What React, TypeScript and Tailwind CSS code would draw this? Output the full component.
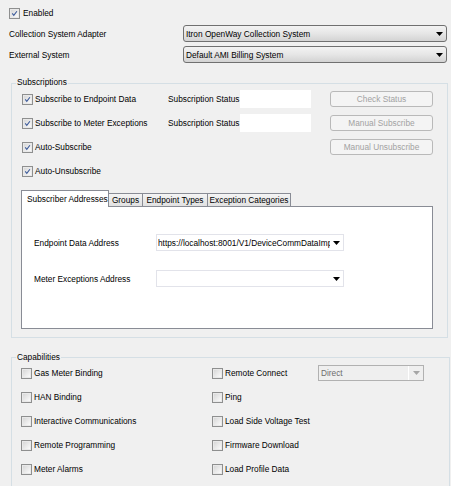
import React from "react";

type CheckProps = { checked?: boolean };

const Check = ({ checked }: CheckProps) => (
  <span className="flex h-[11px] w-[11px] shrink-0 items-center justify-center border border-[#8e8f8f] bg-white">
    <span className="flex h-[9px] w-[9px] items-center justify-center border border-[#e9e9e9] bg-linear-to-br from-[#d8d8d8] to-[#fafafa]">
      {checked && (
        <svg width="9" height="9" viewBox="0 0 9 9">
          <path
            d="M1.6 4.4 L3.6 6.9 L7.6 1.6"
            fill="none"
            stroke="#3b5a9a"
            strokeWidth="1.4"
          />
        </svg>
      )}
    </span>
  </span>
);

const Arrow = ({ color = "#000" }: { color?: string }) => (
  <svg width="7" height="4" viewBox="0 0 7 4" className="shrink-0">
    <polygon points="0,0 7,0 3.5,4" fill={color} />
  </svg>
);

const CheckLabel = ({
  checked,
  label,
  className = "",
}: CheckProps & { label: string; className?: string }) => (
  <div className={`flex items-center gap-[2px] ${className}`}>
    <Check checked={checked} />
    <span className="whitespace-nowrap">{label}</span>
  </div>
);

const SystemSelect = ({ value }: { value: string }) => (
  <div className="flex h-[17px] w-[264px] items-center justify-between rounded-[3px] border border-[#707070] bg-linear-to-b from-[#f3f3f3] via-[#e6e6e6] to-[#d3d3d3] pl-[2px] pr-[3px]">
    <span className="whitespace-nowrap">{value}</span>
    <Arrow />
  </div>
);

const DisabledButton = ({ label }: { label: string }) => (
  <div className="flex h-[16px] w-[103px] shrink-0 items-center justify-center rounded-[3px] border border-[#b9b9b9] bg-[#f4f4f4] text-[#a2a2a2]">
    {label}
  </div>
);

const AddressSelect = ({ value }: { value: string }) => (
  <div className="flex h-[17px] w-[188px] items-center justify-between border border-[#e2e3ea] bg-white pl-[1px] pr-[3px]">
    <span className="overflow-hidden whitespace-nowrap">{value}</span>
    <span className="ml-[3px] flex">
      <Arrow />
    </span>
  </div>
);

const subscriptionRows = [
  { label: "Subscribe to Endpoint Data", status: true, button: "Check Status" },
  { label: "Subscribe to Meter Exceptions", status: true, button: "Manual Subscribe" },
  { label: "Auto-Subscribe", status: false, button: "Manual Unsubscribe" },
  { label: "Auto-Unsubscribe", status: false, button: "" },
];

const tabs = [
  { label: "Groups", w: "w-[34px]" },
  { label: "Endpoint Types", w: "w-[65px]" },
  { label: "Exception Categories", w: "w-[83px]" },
];

const leftCaps = [
  "Gas Meter Binding",
  "HAN Binding",
  "Interactive Communications",
  "Remote Programming",
  "Meter Alarms",
];

const rightCaps = [
  "Remote Connect",
  "Ping",
  "Load Side Voltage Test",
  "Firmware Download",
  "Load Profile Data",
];

export default function App() {
  return (
    <div className="h-[486px] w-[451px] overflow-hidden bg-[#f0f0f0] font-['Liberation_Sans',Arial,sans-serif] text-[8.3px] leading-[10px] text-black">
      {/* top settings */}
      <div className="flex flex-col pl-[9px]">
        <CheckLabel checked label="Enabled" className="mt-[4px] h-[18px] gap-[3px]" />
        <div className="mt-[3px] flex items-center">
          <span className="w-[174px]">Collection System Adapter</span>
          <SystemSelect value="Itron OpenWay Collection System" />
        </div>
        <div className="mt-[4px] flex items-center">
          <span className="w-[174px]">External System</span>
          <SystemSelect value="Default AMI Billing System" />
        </div>
      </div>

      {/* subscriptions group */}
      <div className="relative ml-[11px] mt-[20px] h-[255px] w-[437px] border border-[#d5dfe5]">
        <span className="absolute left-[4px] top-[-8px] bg-[#f0f0f0] px-[1px] leading-[12px]">
          Subscriptions
        </span>
        <div className="flex flex-col gap-[6px] pl-[10px] pt-[6px]">
          {subscriptionRows.map((row) => (
            <div key={row.label} className="flex h-[18px] items-center">
              <CheckLabel checked label={row.label} className="w-[146px]" />
              {row.status ? (
                <>
                  <span className="w-[72px] whitespace-nowrap">Subscription Status</span>
                  <div className="h-[18px] w-[71px] bg-white" />
                </>
              ) : (
                <div className="w-[143px]" />
              )}
              {row.button && (
                <div className="ml-[19px]">
                  <DisabledButton label={row.button} />
                </div>
              )}
            </div>
          ))}
        </div>

        {/* tabs */}
        <div className="ml-[9px] mt-[10px] w-[412px]">
          <div className="flex h-[16px] items-end">
            <div className="relative z-10 -mb-px flex h-[17px] w-[88px] items-start border-x border-t border-[#898c95] bg-white pl-[5px] pt-[3px]">
              Subscriber Addresses
            </div>
            {tabs.map((t, i) => (
              <div
                key={t.label}
                className={`flex h-[13px] ${t.w} items-center justify-center whitespace-nowrap border-t border-r border-[#898c95] bg-linear-to-b from-[#f4f4f4] to-[#e1e1e1] ${i === 0 ? "border-l-0" : ""}`}
              >
                {t.label}
              </div>
            ))}
          </div>
          <div className="flex h-[123px] flex-col gap-[19px] border border-[#898c95] bg-white pl-[12px] pt-[27px]">
            <div className="flex items-center">
              <span className="w-[122px]">Endpoint Data Address</span>
              <AddressSelect value="https://localhost:8001/V1/DeviceCommDataImport" />
            </div>
            <div className="flex items-center">
              <span className="w-[122px]">Meter Exceptions Address</span>
              <AddressSelect value="" />
            </div>
          </div>
        </div>
      </div>

      {/* capabilities group */}
      <div className="relative ml-[11px] mt-[19px] h-[130px] w-[439px] border border-[#d5dfe5]">
        <span className="absolute left-[4px] top-[-7px] bg-[#f0f0f0] px-[1px] leading-[12px]">
          Capabilities
        </span>
        <div className="flex pl-[9px] pt-[6px]">
          <div className="flex w-[191px] flex-col gap-[6px]">
            {leftCaps.map((c) => (
              <CheckLabel key={c} label={c} className="h-[18px]" />
            ))}
          </div>
          <div className="flex flex-col gap-[6px]">
            {rightCaps.map((c, i) => (
              <div key={c} className="flex h-[18px] items-center">
                <CheckLabel label={c} className="w-[106px]" />
                {i === 0 && (
                  <div className="flex h-[16px] w-[106px] items-center border border-[#b1b1b1] bg-[#efefef] text-[#6d6d6d]">
                    <span className="flex-1 pl-[2px]">Direct</span>
                    <span className="flex h-full w-[15px] items-center justify-center border-l border-white">
                      <Arrow color="#a6a6a6" />
                    </span>
                  </div>
                )}
              </div>
            ))}
          </div>
        </div>
      </div>
    </div>
  );
}
